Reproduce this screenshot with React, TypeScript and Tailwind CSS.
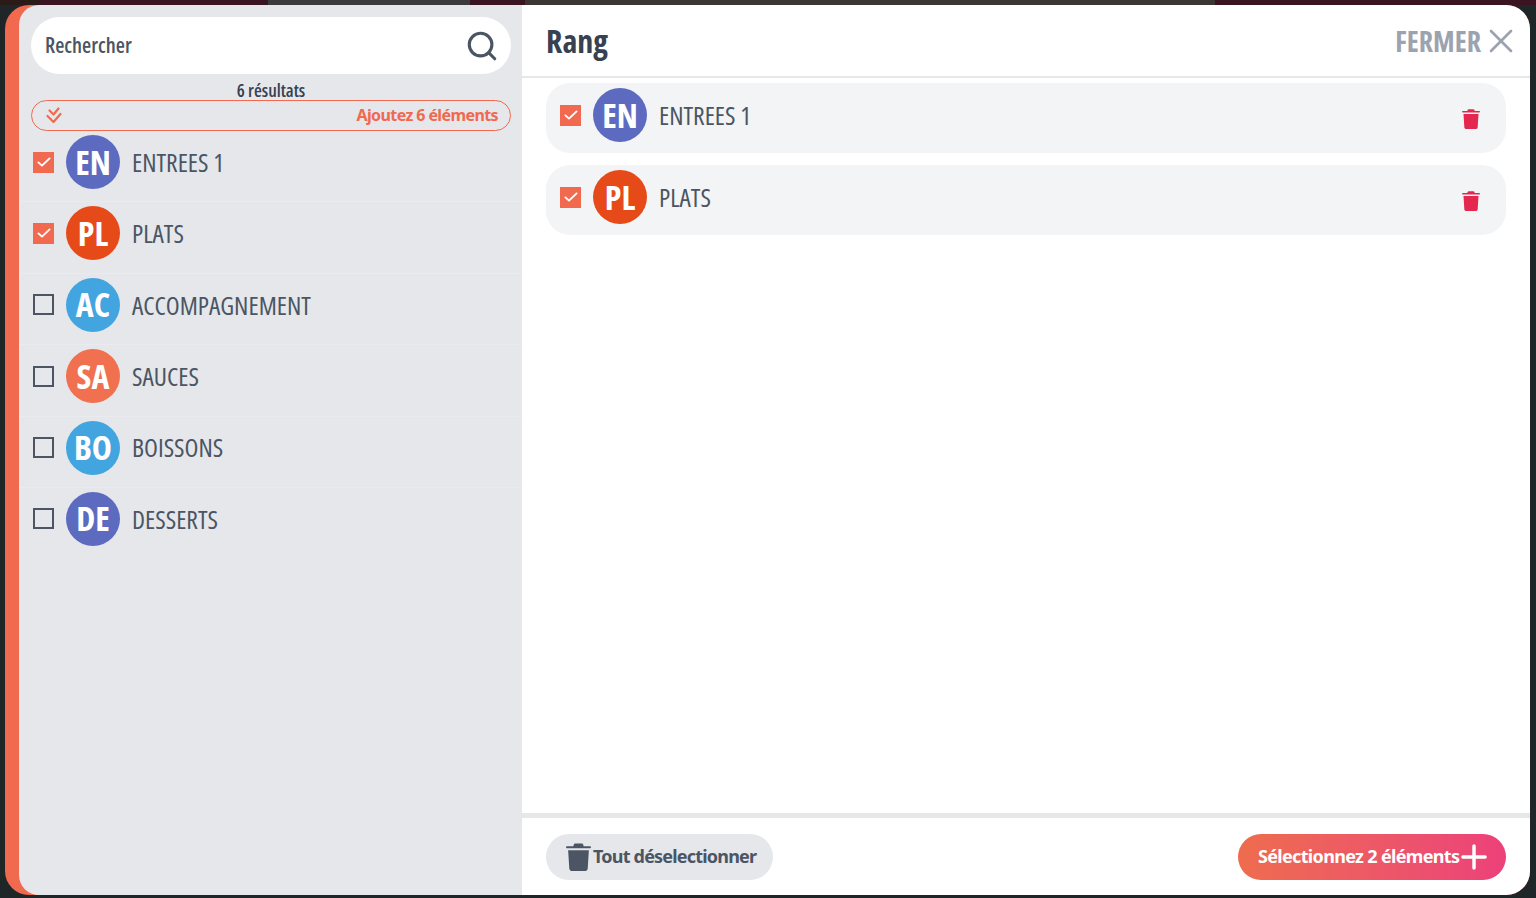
import React from "react";
import { Search, X, Plus } from "lucide-react";

interface Item {
  code: string;
  label: string;
  color: string;
  checked: boolean;
}

const items: Item[] = [
  { code: "EN", label: "ENTREES 1", color: "bg-[#5c6bc0]", checked: true },
  { code: "PL", label: "PLATS", color: "bg-[#e64a19]", checked: true },
  { code: "AC", label: "ACCOMPAGNEMENT", color: "bg-[#42a5e0]", checked: false },
  { code: "SA", label: "SAUCES", color: "bg-[#f1704f]", checked: false },
  { code: "BO", label: "BOISSONS", color: "bg-[#42a5e0]", checked: false },
  { code: "DE", label: "DESSERTS", color: "bg-[#5c6bc0]", checked: false },
];

const Trash = ({ className }: { className: string }) => (
  <svg viewBox="0 0 24 28" className={className} fill="currentColor">
    <path d="M9 1.500h6c.8 0 1.400.5 1.600 1.200L17 4h6c.6 0 1 .4 1 1s-.4 1-1 1H1C.4 6 0 5.600 0 5s.4-1 1-1h6l.4-1.300C7.600 2 8.200 1.500 9 1.500z" />
    <path d="M2 8h20l-1.100 17.500c-.1 1.400-1.200 2.500-2.600 2.500H5.700c-1.400 0-2.500-1.100-2.600-2.500L2 8z" />
  </svg>
);

const DoubleCheck = () => (
  <svg viewBox="0 0 20 20" className="w-[20px] h-[20px]" fill="none" stroke="currentColor" strokeWidth="2.200" strokeLinecap="round" strokeLinejoin="round">
    <path d="M3.500 11l6 6 7-8" />
    <path d="M5.500 5.500l4 4 5-6" />
  </svg>
);

const Checkbox = ({ checked }: { checked: boolean }) =>
  checked ? (
    <div className="w-[21px] h-[21px] shrink-0 bg-[#f1694f] flex items-center justify-center">
      <svg viewBox="0 0 20 20" className="w-[16px] h-[16px]" fill="none" stroke="white" strokeWidth="2.400" strokeLinecap="round" strokeLinejoin="round">
        <path d="M3 10.500l4.500 4L17 5.500" />
      </svg>
    </div>
  ) : (
    <div className="w-[21px] h-[21px] shrink-0 border-[2px] border-[#4b5563]" />
  );

const Avatar = ({ item }: { item: Item }) => (
  <div className={`${item.color} w-[54px] h-[54px] shrink-0 rounded-full flex items-center justify-center text-white text-[34px] font-bold`}>
    {item.code}
  </div>
);

const ItemContent = ({ item }: { item: Item }) => (
  <div className="h-[54px] flex items-center flex-1">
    <Checkbox checked={item.checked} />
    <div className="ml-[12px]"><Avatar item={item} /></div>
    <span className="ml-[12px] text-[#4b5563] text-[25.5px]">{item.label}</span>
  </div>
);

export default function App() {
  return (
    <div className="h-screen w-full bg-[#1f2628] flex flex-col overflow-hidden font-['Open_Sans',sans-serif] font-stretch-condensed">
      {/* fond derriere la modale */}
      <div className="h-[5px] shrink-0 flex">
        <div className="w-[40px] bg-[#2a1a18]" />
        <div className="w-[228px] bg-[#3a1420]" />
        <div className="w-[202px] bg-[#3c3a3a]" />
        <div className="w-[55px] bg-[#3a1420]" />
        <div className="w-[690px] bg-[#3c3535]" />
        <div className="flex-1 bg-[#3a1420]" />
      </div>
      <div className="flex-1 min-h-0 pl-[5px] pr-[6px] pb-[3px]">
        <div className="h-full flex rounded-[24px] overflow-hidden bg-[#f1694f] pl-[14px]">
          {/* colonne gauche */}
          <div className="w-[503px] shrink-0 bg-[#e5e7eb] rounded-l-[20px] flex flex-col pt-[12px]">
            <div className="ml-[12px] mr-[11px] h-[57px] bg-white rounded-full flex items-center justify-between pl-[14px] pr-[12px]">
              <span className="text-[#4b5563] text-[21px] font-semibold">Rechercher</span>
              <Search className="w-[34px] h-[34px] text-[#4b5563]" strokeWidth={2.200} />
            </div>
            <div className="ml-[12px] mr-[11px] h-[26px] pt-[6px] flex items-center justify-center text-[#374151] text-[18px] font-semibold">6 résultats</div>
            <div className="ml-[12px] mr-[11px] h-[31px] pb-[2px] border border-[#f1694f] rounded-full flex items-center justify-between pl-[12px] pr-[12px] text-[#f1694f]">
              <DoubleCheck />
              <span className="font-['Noto_Sans',sans-serif] text-[16px] font-bold tracking-[-0.6px]">Ajoutez 6 éléments</span>
            </div>
            <div>
              {items.map((item) => (
                <div key={item.code} className="h-[71.4px] flex items-start pt-[4px] pl-[14px] border-b border-[#e9ebee] last:border-b-0">
                  <ItemContent item={item} />
                </div>
              ))}
            </div>
          </div>

          {/* colonne droite */}
          <div className="flex-1 bg-white flex flex-col">
            <div className="h-[73px] shrink-0 border-b-[2px] border-[#e5e7eb] flex items-center justify-between pl-[24px] pr-[9px]">
              <span className="text-[#374151] text-[32px] font-bold">Rang</span>
              <div className="flex items-center text-[#9ca3af]">
                <span className="text-[28px] font-bold">FERMER</span>
                <X className="w-[40px] h-[40px]" strokeWidth={1.600} />
              </div>
            </div>
            <div className="flex-1 pt-[5px] px-[24px] flex flex-col gap-[12px]">
              {items.filter((i) => i.checked).map((item) => (
                <div key={item.code} className="h-[70px] bg-[#f3f4f6] rounded-[24px] flex items-start pt-[5px] pl-[14px] pr-[26px]">
                  <ItemContent item={item} />
                  <Trash className="mt-[19px] w-[18px] h-[23px] text-[#e3274f]" />
                </div>
              ))}
            </div>
            <div className="h-[82px] shrink-0 border-t-[5px] border-[#e5e7eb] flex items-center justify-between px-[24px]">
              <button className="h-[46px] w-[227px] rounded-full bg-[#e5e7eb] text-[#4b5563] flex items-center pl-[20px] gap-[2px] font-['Noto_Sans',sans-serif] text-[18px] font-bold tracking-[-0.8px]">
                <Trash className="w-[25px] h-[29px] shrink-0 text-[#4b5563]" />
                <span className="whitespace-nowrap">Tout déselectionner</span>
              </button>
              <button className="h-[46px] w-[268px] rounded-full bg-gradient-to-r from-[#ee6c4d] to-[#ec407a] text-white flex items-center pl-[20px] font-['Noto_Sans',sans-serif] text-[18px] font-bold tracking-[-0.67px]">
                <span className="whitespace-nowrap">Sélectionnez 2 éléments</span>
                <Plus className="w-[38px] h-[38px] -ml-[4px] shrink-0" strokeWidth={2.200} />
              </button>
            </div>
          </div>
        </div>
      </div>
    </div>
  );
}
